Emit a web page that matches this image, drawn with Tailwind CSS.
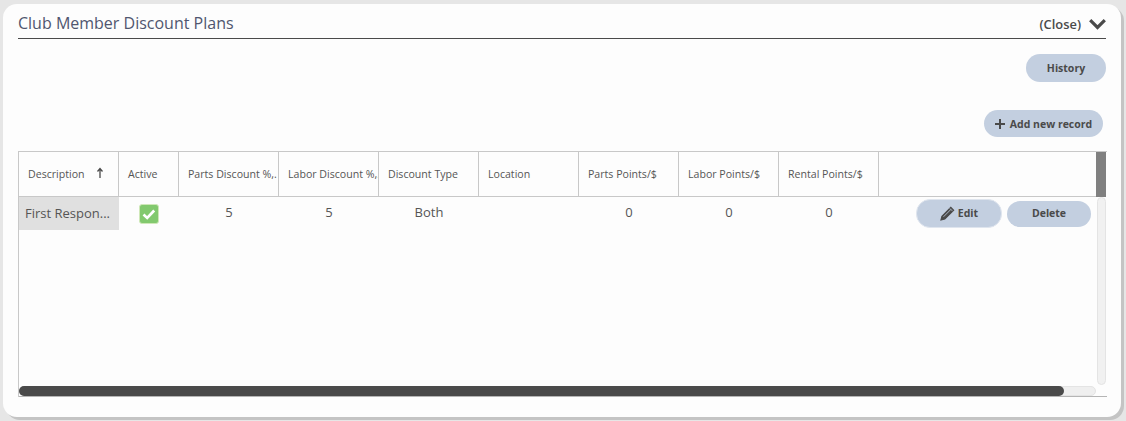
<!DOCTYPE html>
<html lang="en">
<head>
  <meta charset="UTF-8">
  <title>Club Member Discount Plans</title>
  <script src="https://cdn.jsdelivr.net/npm/@tailwindcss/browser@4"></script>
</head>
<body class="bg-[#e6e6e6] h-[421px] overflow-hidden font-['Open_Sans',sans-serif] text-[#4a4a4a]">

  <div class="ml-[3px] mt-1 w-[1118px] h-[413px] bg-[#fdfdfd] rounded-[14px] shadow-[3px_3px_0_#c4c4c4] px-[15px]">

    <div class="h-[34px] border-b border-[#4a4a4a] w-[1088px] flex items-center justify-between box-content">
      <h2 class="text-base text-[#50566f] leading-[38px] mt-1">Club Member Discount Plans</h2>
      <div class="flex items-center gap-2 pt-[7px]">
        <span class="text-[12.900px] font-semibold">(Close)</span>
        <svg width="17" height="11" viewBox="0 0 17 11" fill="none" stroke="#4a4a4a" stroke-width="3.200"><path d="M1.200 1.200 8.500 8.500l7.300-7.300"/></svg>
      </div>
    </div>

    <div class="w-[1088px] flex justify-end mt-[15px]">
      <button class="w-20 h-7 pt-[2px] rounded-[14px] bg-[#c3cfe0] text-[10.500px] font-bold">History</button>
    </div>

    <div class="w-[1085px] flex justify-end mt-7">
      <button class="w-[119px] h-[27px] pt-[2px] rounded-[14px] bg-[#c3cfe0] text-[10.500px] font-bold flex items-center justify-center gap-[5px]">
        <svg width="10" height="10" viewBox="0 0 10 10" stroke="#4a4a4a" stroke-width="2" class="-mt-[2px]"><path d="M5 0v10M0 5h10"/></svg>
        Add new record
      </button>
    </div>

    <div class="relative w-[1089px] h-[246px] mt-[14px] border-l border-t border-[#c8c8c8]">
      <div class="flex h-[45px] w-[1088px] text-[10.600px] text-[#555]">
        <div class="w-[100px] pt-[2px] border-b border-r border-[#c8c8c8] flex items-center pl-[9px] gap-[11px]">Description
          <svg width="8" height="12" viewBox="0 0 8 12" fill="none" stroke="#4a4a4a" stroke-width="1.300" class="-mt-[5px]"><path d="M4 11V2M1.500 4.500 4 1.500l2.500 3"/></svg>
        </div>
        <div class="w-[60px] pt-[2px] border-b border-r border-[#c8c8c8] flex items-center pl-[9px]">Active</div>
        <div class="w-[100px] pt-[2px] border-b border-r border-[#c8c8c8] flex items-center pl-[9px] whitespace-nowrap overflow-hidden">Parts Discount %,.</div>
        <div class="w-[100px] pt-[2px] border-b border-r border-[#c8c8c8] flex items-center pl-[9px] whitespace-nowrap overflow-hidden">Labor Discount %,.</div>
        <div class="w-[100px] pt-[2px] border-b border-r border-[#c8c8c8] flex items-center pl-[9px]">Discount Type</div>
        <div class="w-[100px] pt-[2px] border-b border-r border-[#c8c8c8] flex items-center pl-[9px]">Location</div>
        <div class="w-[100px] pt-[2px] border-b border-r border-[#c8c8c8] flex items-center pl-[9px]">Parts Points/$</div>
        <div class="w-[100px] pt-[2px] border-b border-r border-[#c8c8c8] flex items-center pl-[9px]">Labor Points/$</div>
        <div class="w-[100px] pt-[2px] border-b border-r border-[#c8c8c8] flex items-center pl-[9px]">Rental Points/$</div>
        <div class="w-[217px] border-b border-[#c8c8c8]"></div>
        <div class="w-[10px] h-[45px] bg-[#808080]"></div>
      </div>

      <div class="flex h-[34px] items-start text-[13px] text-[#555] text-center">
        <div class="w-[100px] h-[33px] bg-[#e0e0e0] flex items-center pl-[6px] whitespace-nowrap">First Respon...</div>
        <div class="w-[60px] h-[34px] flex items-center justify-center">
          <span class="w-5 h-5 rounded-[3px] bg-[#82c96e] border border-[#cfe8b8] flex items-center justify-center">
            <svg width="14" height="11" viewBox="0 0 14 11" fill="none" stroke="#fff" stroke-width="2.600"><path d="M1.500 5.500 5.200 9l7-7.500"/></svg>
          </span>
        </div>
        <div class="w-[100px] leading-[30px]">5</div>
        <div class="w-[100px] leading-[30px]">5</div>
        <div class="w-[100px] leading-[30px]">Both</div>
        <div class="w-[100px]"></div>
        <div class="w-[100px] leading-[30px]">0</div>
        <div class="w-[100px] leading-[30px]">0</div>
        <div class="w-[100px] leading-[30px]">0</div>
        <div class="flex items-center gap-[5px] ml-[37px] pt-[2px] text-[#4a4a4a]">
          <button class="w-[86px] h-[29px] rounded-[14px] bg-[#c3cfe0] border border-[#dfe5ee] text-[10.500px] font-bold flex items-center justify-center gap-[3px]">
            <svg width="15" height="15" viewBox="0 0 15 15" fill="none" stroke="#4a4a4a">
              <path d="M1 14l1-3.800L10.800 1.400 13.600 4.200 4.800 13z" stroke-width="1.200" fill="#4a4a4a"/>
              <path d="M3.500 10.800 11 3.300" stroke="#c3cfe0" stroke-width="0.800"/>
              <path d="M9.800 2.400l2.800 2.800" stroke="#c3cfe0" stroke-width="0.700"/>
            </svg>
            Edit
          </button>
          <button class="w-[84px] h-[26px] rounded-[13px] bg-[#c3cfe0] text-[10.500px] font-bold">Delete</button>
        </div>
      </div>

      <!-- overlay scrollbars -->
      <div class="absolute left-[1078px] top-[45px] w-[9px] h-[188px] rounded-[5px] bg-[#f1f1f1] border border-[#e4e4e4]"></div>
      <div class="absolute left-0 top-[234px] w-[1077px] h-[10px] rounded-[5px] bg-[#efefef] border border-[#e4e4e4]"></div>
      <div class="absolute left-0 top-[234px] w-[1045px] h-[10px] rounded-[5px] bg-[#4a4a4a]"></div>
      <div class="absolute left-0 top-[244px] w-[1088px] h-px bg-[#b5b5b5]"></div>
    </div>
  </div>

</body>
</html>
